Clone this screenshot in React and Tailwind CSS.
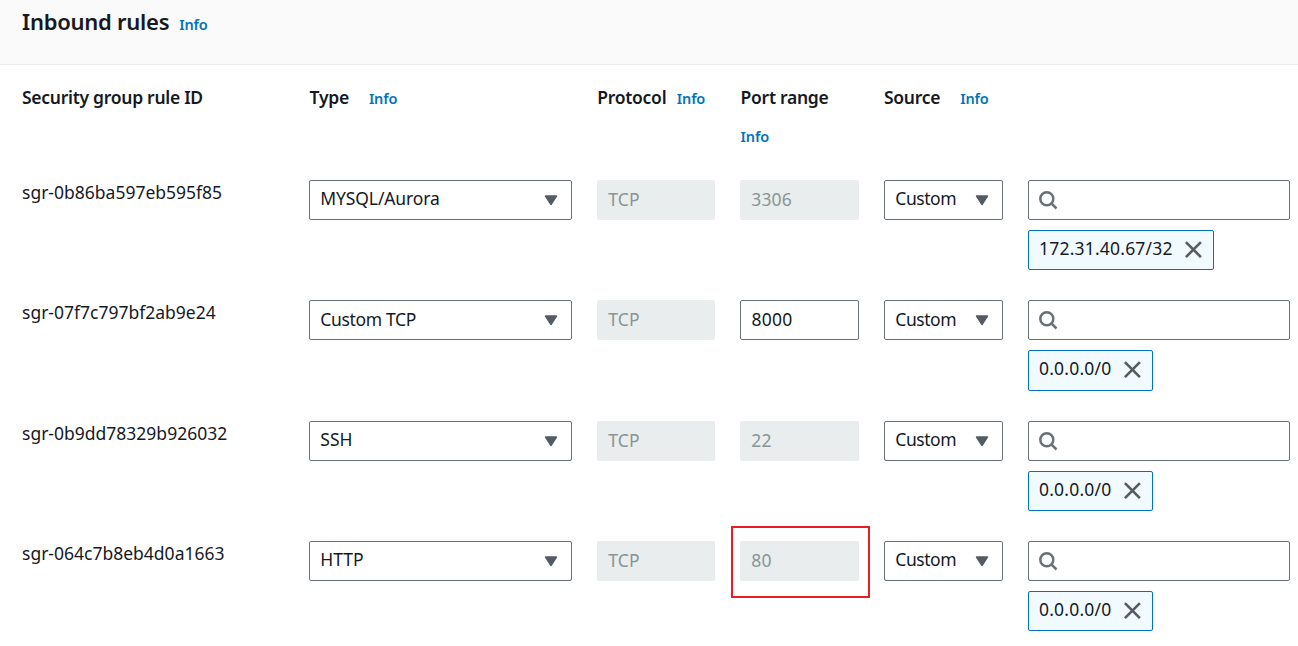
const rules = [
  { id: 'sgr-0b86ba597eb595f85', type: 'MYSQL/Aurora', typeClass: 'leading-[35.6px] tracking-[-0.12px]', port: '3306', cidr: '172.31.40.67/32' },
  { id: 'sgr-07f7c797bf2ab9e24', type: 'Custom TCP', typeClass: 'leading-[37px] tracking-[-0.34px]', sourceClass: 'leading-[37px]', port: '8000', cidr: '0.0.0.0/0', editable: true },
  { id: 'sgr-0b9dd78329b926032', type: 'SSH', typeClass: 'leading-[35.6px]', port: '22', cidr: '0.0.0.0/0' },
  { id: 'sgr-064c7b8eb4d0a1663', type: 'HTTP', typeClass: 'leading-[35.6px]', port: '80', cidr: '0.0.0.0/0', marked: true },
];

const columns = 'grid grid-cols-[262px_263px_118px_119px_119px_262px] gap-x-[25px] pl-[22px]';

function Info({ className = '' }) {
  return (
    <a className={`text-[14.5px] font-semibold tracking-[-0.15px] text-[#0073bb] ${className}`}>Info</a>
  );
}

function Caret() {
  return (
    <svg className="mt-[14px] h-[11px] w-[14px] shrink-0" viewBox="0 0 14 11" aria-hidden="true">
      <path d="M1.5 1h11L7 9.5z" fill="#545b64" stroke="#545b64" strokeWidth="1.4" strokeLinejoin="round" />
    </svg>
  );
}

function Select({ value, className = '' }) {
  return (
    <div className="flex h-10 justify-between rounded-[2px] border border-[#687078] bg-white pr-[13px] pl-[10.3px]">
      <span className={className}>{value}</span>
      <Caret />
    </div>
  );
}

function Field({ value, editable }) {
  return editable ? (
    <div className="h-10 rounded-[2px] border border-[#687078] bg-white pl-[10.5px] leading-[36px] tracking-[0.2px]">{value}</div>
  ) : (
    <div className="h-10 rounded-[2px] bg-[#eaeded] pl-[11.2px] leading-[38px] tracking-[0.2px] text-[#879596]">{value}</div>
  );
}

function SearchBox() {
  return (
    <div className="h-10 rounded-[2px] border border-[#687078] bg-white pt-[9px] pl-[9px]">
      <svg className="h-5 w-5" viewBox="0 0 20 20" fill="none" stroke="#687078" strokeWidth="2.5" aria-hidden="true">
        <circle cx="8.8" cy="8.8" r="6.5" />
        <path d="M13.4 13.4l5.1 5.1" />
      </svg>
    </div>
  );
}

function Chip({ value }) {
  return (
    <div className="mt-[10px] flex h-[40.2px] w-fit gap-[12.4px] rounded-[2px] border border-[#0073bb] bg-[#f1faff] pr-[11px] pl-[10px]">
      <span className="leading-[35px] tracking-[0.2px]">{value}</span>
      <svg className="mt-[10px] h-[17px] w-[17px] shrink-0" viewBox="0 0 17 17" fill="none" stroke="#545b64" strokeWidth="2.6" aria-hidden="true">
        <path d="M0.9 1.1l15 15M15.9 1.1L0.9 16.1" />
      </svg>
    </div>
  );
}

function Rule({ rule }) {
  return (
    <div className={`${columns} h-[120.33px]`}>
      <div className="leading-[24px]">{rule.id}</div>
      <Select value={rule.type} className={rule.typeClass} />
      <Field value="TCP" />
      <div className="relative">
        <Field value={rule.port} editable={rule.editable} />
        {rule.marked && <div className="absolute -top-[15px] -left-[9px] h-[72px] w-[139px] border-2 border-[#ed1c24]" />}
      </div>
      <Select value="Custom" className={`tracking-[-0.46px] ${rule.sourceClass ?? 'leading-[35.6px]'}`} />
      <div>
        <SearchBox />
        <Chip value={rule.cidr} />
      </div>
    </div>
  );
}

export default function App() {
  return (
    <div className="h-[646px] w-[1298px] overflow-hidden bg-white font-['Noto_Sans',sans-serif] text-[17.5px] whitespace-nowrap text-[#16191f]">
      <header className="flex h-[65px] items-baseline gap-[10px] border-b border-[#eaeded] bg-[#fafafa] pl-[22px]">
        <h2 className="text-[22px] leading-[42px] font-semibold tracking-[-0.26px]">Inbound rules</h2>
        <Info />
      </header>
      <div className={`${columns} h-[115px] pt-[13px] leading-[38px] font-semibold tracking-[-0.28px]`}>
        <div>Security group rule ID</div>
        <div className="flex items-baseline gap-[20px] pl-[0.6px]">Type<Info /></div>
        <div className="flex items-baseline gap-[10.5px] pl-[0.3px]">Protocol<Info /></div>
        <div className="flex flex-col pl-[0.6px]">Port range<Info className="pt-px" /></div>
        <div className="flex items-baseline gap-[20px]">Source<Info /></div>
      </div>
      {rules.map((rule) => <Rule key={rule.id} rule={rule} />)}
    </div>
  );
}
